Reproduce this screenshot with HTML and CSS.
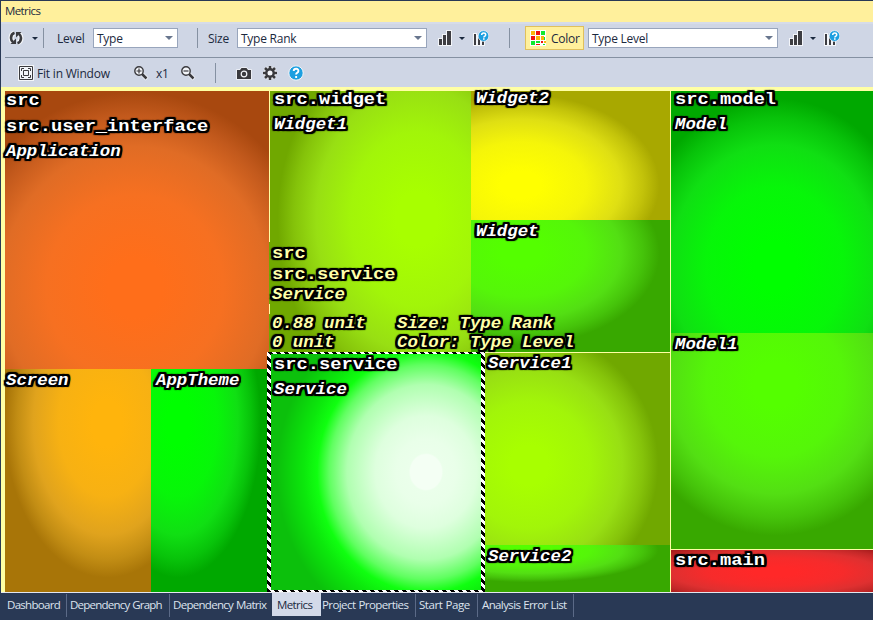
FILE: index.html
```html
<!DOCTYPE html>
<html lang="en">
<head>
<meta charset="utf-8">
<title>Metrics</title>
<link rel="stylesheet" href="styles.css">
</head>
<body>
<svg width="0" height="0" class="defs">
  <defs>
    <g id="bars"><path d="M0 8h3v6H0zM4 4h3v10H4zM8 0h4v14H8z" fill="#f3f5f9" stroke="#f3f5f9" stroke-width="2"/><path d="M0 8h3v6H0zM4 4h3v10H4zM8 0h4v14H8z" fill="#3d3d42"/></g>
    <g id="barsq"><path d="M0 3h2v11H0zM4 5h2v9H4zM8 9h2v5H8z" fill="#3d3d42" stroke="#f3f5f9" stroke-width="2" paint-order="stroke"/><circle cx="9.500" cy="5" r="5.400" fill="#1c9fe0" stroke="#f3f5f9" stroke-width=".8"/><path d="M7.700 4q0-2 2-2t2 1.700q0 1-1.100 1.600-.8.5-.8 1.300M9 8h1.600" fill="none" stroke="#fff" stroke-width="1.500"/></g>
  </defs>
</svg>
<div class="window">
  <header class="title">Metrics</header>
  <div class="bar main-bar">
    <svg class="icon" viewBox="0 0 16 16"><g fill="none" stroke="#f3f5f9" stroke-width="5"><path d="M6.500 3.200Q3 4 3 8q0 2 1.500 4M9.500 12.800Q13 12 13 8q0-2-1.500-4"/></g><g fill="none" stroke="#3a3a3e" stroke-width="2.600"><path d="M6.500 2.800Q3 4 3 8q0 2.500 2 4M9.500 13.200Q13 12 13 8q0-2.500-2-4"/></g><path d="M2.500 14H8V8.500zM13.500 2H8v5.500z" fill="#3a3a3e"/></svg>
    <i class="caret"></i><i class="sep"></i>
    <span>Level</span>
    <div class="select"><span>Type</span><i class="arrow"></i></div>
    <i class="sep"></i>
    <span>Size</span>
    <div class="select"><span>Type Rank</span><i class="arrow"></i></div>
    <svg class="icon" viewBox="-2 -1 16 16"><use href="#bars"/></svg>
    <i class="caret"></i>
    <svg class="icon" viewBox="-1 -1 16 16"><use href="#barsq"/></svg>
    <i class="sep"></i>
    <div class="toggle">
      <svg class="grid-icon" viewBox="0 0 16 16"><path fill="#fff" d="M0 0h16v16H0z"/><path fill="#fcb40c" d="M1 1h4v4H1zM6 6h4v4H6zM11 6h3v4h-3zM14 11h2v2h-2z"/><path fill="#f01010" d="M6 1h4v4H6zM1 6h4v4H1zM11 11h2v2h-2zM6 14h4v1H6z"/><path fill="#10e830" d="M11 1h4v4h-4zM1 11h4v4H1zM6 11h4v2H6zM14 7h1v3h-1zM13 14h2v1h-2z"/></svg>
      <span>Color</span>
    </div>
    <div class="select"><span>Type Level</span><i class="arrow"></i></div>
    <svg class="icon" viewBox="-2 -1 16 16"><use href="#bars"/></svg>
    <i class="caret"></i>
    <svg class="icon" viewBox="-1 -1 16 16"><use href="#barsq"/></svg>
  </div>
  <div class="bar view-bar">
    <svg class="icon" viewBox="0 0 16 16"><path fill="#f3f5f9" d="M0 0h16v16H0z"/><path d="M1.500 1.500h13v13h-13zM5.500 5.500h5v5h-5zM3.500 6V3.500H6M10 3.500h2.500V6M12.500 10v2.500H10M6 12.500H3.500V10" fill="none" stroke="#3a3a3e"/></svg>
    <span>Fit in Window</span>
    <svg class="icon" viewBox="0 0 16 16"><path d="M9 9l5 5" stroke="#f3f5f9" stroke-width="4"/><circle cx="6" cy="6" r="4.200" fill="#f3f5f9" stroke="#3a3a3e" stroke-width="1.400"/><path d="M9 9l4.500 4.500" stroke="#3a3a3e" stroke-width="2.500"/><path d="M3.500 6h5M6 3.500v5" stroke="#3a3a3e" stroke-width="1.200"/></svg>
    <span>x1</span>
    <svg class="icon" viewBox="0 0 16 16"><path d="M9 9l5 5" stroke="#f3f5f9" stroke-width="4"/><circle cx="6" cy="6" r="4.200" fill="#f3f5f9" stroke="#3a3a3e" stroke-width="1.400"/><path d="M9 9l4.500 4.500" stroke="#3a3a3e" stroke-width="2.500"/><path d="M3.500 6h5" stroke="#3a3a3e" stroke-width="1.200"/></svg>
    <i class="sep"></i>
    <svg class="icon" viewBox="0 0 16 16"><path d="M1 5h3l1.500-2h5L12 5h3v9H1z" fill="#3a3a3e" stroke="#f3f5f9" stroke-width="1.600" paint-order="stroke"/><circle cx="8" cy="9" r="2.800" fill="#3a3a3e" stroke="#f3f5f9" stroke-width="1.200"/></svg>
    <svg class="icon" viewBox="0 0 16 16"><g stroke="#f3f5f9" stroke-width="4"><path d="M8 1v14M1 8h14M3 3l10 10M13 3L3 13"/></g><g stroke="#3a3a3e" stroke-width="2.600"><path d="M8 1v14M1 8h14M3 3l10 10M13 3L3 13"/></g><circle cx="8" cy="8" r="3.700" fill="#f3f5f9" stroke="#3a3a3e" stroke-width="2.400"/></svg>
    <svg class="icon" viewBox="0 0 16 16"><circle cx="8" cy="8" r="7.200" fill="#1c9fe0" stroke="#f3f5f9"/><path d="M5.700 6q.1-2.200 2.400-2.200T10.400 6q0 1.200-1.300 1.900-1 .6-1 1.600M7.200 12h1.900" fill="none" stroke="#fff" stroke-width="1.900"/></svg>
  </div>
  <main class="map">
    <section class="ui">
      <div class="tile application"><b class="pkg">src</b><b class="pkg">src.user_interface</b><b class="type">Application</b></div>
      <div class="tile screen"><b class="type">Screen</b></div>
      <div class="tile apptheme"><b class="type">AppTheme</b></div>
    </section>
    <section class="middle">
      <div class="widgets">
        <div class="tile widget1"><b class="pkg">src.widget</b><b class="type">Widget1</b></div>
        <div class="tile widget2"><b class="type">Widget2</b></div>
        <div class="tile widget"><b class="type">Widget</b></div>
      </div>
      <div class="services">
        <div class="tile service"><b class="pkg">src.service</b><b class="type">Service</b></div>
        <div class="tile service1"><b class="type">Service1</b></div>
        <div class="tile service2"><b class="type">Service2</b></div>
      </div>
      <div class="info">
        <b class="pkg">src</b><b class="pkg">src.service</b><b class="type">Service</b>
        <div class="facts"><b class="type">0.88 unit</b><b class="type">Size: Type Rank</b><b class="type">0 unit</b><b class="type">Color: Type Level</b></div>
      </div>
    </section>
    <section class="models">
      <div class="tile model"><b class="pkg">src.model</b><b class="type">Model</b></div>
      <div class="tile model1"><b class="type">Model1</b></div>
      <div class="tile main"><b class="pkg">src.main</b></div>
    </section>
  </main>
  <nav class="tabs"><span>Dashboard</span><span>Dependency Graph</span><span>Dependency Matrix</span><span class="active">Metrics</span><span>Project Properties</span><span>Start Page</span><span>Analysis Error List</span></nav>
</div>
</body>
</html>
```
FILE: styles.css
```css
* { box-sizing: border-box; }
body { margin: 0; background: #293955; overflow: hidden; font: 12px "Open Sans", "Noto Sans", sans-serif; letter-spacing: -.25px; color: #1b293e; }
.defs { position: absolute; }
.window { width: 873px; height: 620px; padding: 1px 0 0 1px; display: flex; flex-direction: column; overflow: hidden; }
.title { height: 21px; background: #fff09c; padding-left: 4px; line-height: 20px; font-size: 11.500px; letter-spacing: -.6px; }
.bar { display: grid; align-items: center; background: #cfd6e5; white-space: nowrap; }
.main-bar { height: 35px; padding: 0 0 5px 7px; border-top: 2px solid #d6dce9; grid-template-columns: 24px 11px 14px 36px 104px 11px 29px 200px 22px 14px 36px 16px 63px 200px 22px 14px 20px; }
.view-bar { height: 30px; padding: 2px 0 0 17px; grid-template-columns: 19px 96px 23px 24px 35px 21px 26px 26px 20px; position: relative; }
.view-bar span { letter-spacing: -.2px; }
.view-bar::before { content: ""; position: absolute; left: 4px; right: 0; top: 0; height: 1px; background: #8591a2; }
.icon { width: 16px; height: 16px; display: block; }
.sep { width: 1px; height: 20px; background: #8591a2; }
.caret { width: 0; height: 0; border: 3px solid transparent; border-top-color: #1b293e; border-bottom: 0; }
.arrow { width: 0; height: 0; border: 4px solid transparent; border-top-color: #68768e; border-bottom: 0; }
.select { height: 20px; border: 1px solid #98a5bc; background: #fff; display: flex; justify-content: space-between; align-items: center; padding: 0 4px 0 3px; margin-right: 10px; }
.main-bar > :nth-child(5) { margin-right: 19px; }
.toggle { width: 59px; height: 24px; border: 1px solid #e0c05c; background: #fff09c; display: flex; align-items: center; gap: 5px; padding-left: 4px; }
.grid-icon { width: 16px; height: 16px; flex: none; }
.map { height: 506px; padding: 4px 0 0 4px; background: #ffffa4; border-bottom: 1px solid #e4e7ef; display: grid; grid-template-columns: 264px 400px 202px; column-gap: 1px; flex: none; }
.ui { display: grid; grid-template: 278px 223px / 146px 118px; }
.application { grid-column: span 2; }
.middle { position: relative; display: grid; grid-template-rows: 261px 239px; row-gap: 1px; }
.widgets { display: grid; grid-template: 129px 132px / 201px 199px; }
.widget1 { grid-row: span 2; }
.services { display: grid; grid-template: 192px 47px / 215px 185px; }
.services .service { grid-row: span 2; }
.models { display: grid; grid-template-rows: 242px 216px 42px; }
.main { margin-top: 1px; height: 42px; }
.tile {
  padding: 0 0 0 3px; display: flex; flex-direction: column; align-items: flex-start; gap: 4px; min-width: 0; overflow: visible;
  background: radial-gradient(ellipse var(--rx) var(--ry) at var(--cx) var(--cy), var(--hi) 0, var(--hi) 15%, var(--soft) 48%, var(--mid) 73%, var(--low) 89%, var(--dark) 101%);
}
.application { --rx: 184px; --ry: 194px; --cx: 130px; --cy: 197px; --hi: #ff6e1a; --soft: #f67021; --mid: #e06c25; --low: #c2591c; --dark: #a8480f; padding-left: 1px; }
.screen { --rx: 101px; --ry: 153px; --cx: 102px; --cy: 54px; --hi: #ffb40c; --soft: #f7b113; --mid: #e0a31d; --low: #c28d14; --dark: #a87508; padding-left: 1px; }
.apptheme { --rx: 82px; --ry: 153px; --cx: 27px; --cy: 54px; --hi: #00ff00; --soft: #07f609; --mid: #10df13; --low: #08c30a; --dark: #00a800; padding-left: 5px; }
.widget1 { --rx: 138px; --ry: 181px; --cx: 147px; --cy: 128px; --hi: #a8ff00; --soft: #a2f509; --mid: #98df13; --low: #85c30a; --dark: #70a800; padding-left: 4px; }
.widget2 { --rx: 137px; --ry: 90px; --cx: 50px; --cy: 94px; --hi: #ffff00; --soft: #f5f509; --mid: #dfdf13; --low: #c3c30a; --dark: #a8a800; }
.widget { --rx: 137px; --ry: 91px; --cx: 50px; --cy: 33px; --hi: #54ff00; --soft: #55f609; --mid: #53df13; --low: #45c30a; --dark: #38a800; }
.widget, .widget2 { padding-left: 5px; }
.service { background: radial-gradient(ellipse 149px 165px at 156px 119px, #f4fff4 0 10.500%, #ebffeb 11.500%, #e9ffe9 20%, #deffde 34%, #b0ffb0 53%, #60ff60 65%, #10ff10 73%, #0ce80c 82%, #0cc00c 100%); padding-left: 4px; position: relative; }
.service::before { content: ""; position: absolute; inset: -1px 0 0 -3px; background: repeating-linear-gradient(45deg, #000 0 2.830px, #fff 2.830px 5.660px); clip-path: polygon(evenodd, 0 0, 100% 0, 100% 100%, 0 100%, 0 0, 4px 2px, 214px 2px, 214px 238px, 4px 238px, 4px 2px); }
.service1 { --rx: 128px; --ry: 132px; --cx: 44px; --cy: 112px; --hi: #a8ff00; --soft: #a2f509; --mid: #98df13; --low: #85c30a; --dark: #70a800; }
.service2 { --rx: 128px; --ry: 32px; --cx: 44px; --cy: 5px; --hi: #54ff00; --soft: #55f609; --mid: #53df13; --low: #45c30a; --dark: #38a800; }
.model { --rx: 143px; --ry: 167px; --cx: 104px; --cy: 176px; --hi: #00ff00; --soft: #07f609; --mid: #10df13; --low: #08c30a; --dark: #00a800; }
.model1 { --rx: 143px; --ry: 149px; --cx: 104px; --cy: 52px; --hi: #54ff00; --soft: #55f609; --mid: #53df13; --low: #45c30a; --dark: #38a800; }
.main { --rx: 143px; --ry: 29px; --cx: 104px; --cy: 22px; --hi: #ff2828; --soft: #f62b2b; --mid: #df3030; --low: #c32828; --dark: #a81c1c; }
.pkg, .type {
  font: bold 16px/22px "Liberation Mono", monospace; letter-spacing: 0; color: #fff; white-space: nowrap; transform: scaleX(1.170); transform-origin: 0 50%; position: relative;
  text-shadow: 1px 0 #000, -1px 0 #000, 0 1px #000, 0 -1px #000, 2px 0 #000, -2px 0 #000, 0 2px #000, 0 -2px #000, 2px 1px #000, 2px -1px #000, -2px 1px #000, -2px -1px #000, 1px 2px #000, 1px -2px #000, -1px 2px #000, -1px -2px #000, 2px 2px 1px #000, -2px 2px 1px #000, 2px -2px 1px #000, -2px -2px 1px #000, 0 0 3px #000;
}
.type { font-style: italic; transform: scaleX(1.085); margin-top: 1px; }
.application .pkg:first-child { margin-top: -1px; }
.application .type, .service .type { margin-top: -1px; }
.widget1 .pkg, .model .pkg { margin-top: -2px; }
.widget1 .type, .model .type { margin-top: -1px; }
.service .pkg { margin-top: 1px; }
.widget2 .type { margin-top: -3px; }
.service1 .type { margin-top: 0; }
.models .tile { padding-left: 3.500px; }
.info { position: absolute; left: 2px; top: 153px; display: flex; flex-direction: column; align-items: flex-start; }
.info::before { content: ""; position: absolute; left: -3px; top: -2px; width: 1px; height: 110px; background: linear-gradient(#70a800 0 62px, transparent 62px 72px, #70a800 72px); }
.info .pkg, .info .type { color: #ffffa8; line-height: 21px; margin: 0; }
.info > .type { top: -1px; }
.facts { display: grid; grid-template-columns: 125px auto; margin-top: 8px; }
.info .facts .type { line-height: 19px; }
.tabs { height: 24px; display: flex; color: #dde3ee; background: #293955; padding-left: 3px; font-size: 11.500px; letter-spacing: -.7px; word-spacing: .6px; flex: none; }
.tabs span { height: 23px; margin-top: 1px; line-height: 22px; border-right: 1px solid #5b6a87; padding-left: 3px; white-space: nowrap; }
.tabs span:nth-child(1) { width: 63px; }
.tabs span:nth-child(2) { width: 103px; letter-spacing: -.78px; }
.tabs span:nth-child(3) { width: 102px; border: 0; }
.tabs span.active { width: 49px; background: #d3dae9; color: #1b293e; border: 0; margin-top: 0; padding-left: 5px; line-height: 24px; letter-spacing: -.6px; }
.tabs span:nth-child(5) { width: 95px; padding-left: 1px; letter-spacing: -.58px; }
.tabs span:nth-child(6) { width: 62px; letter-spacing: -.45px; }
.tabs span:nth-child(7) { width: 96px; padding-left: 4px; letter-spacing: -.62px; }
```
